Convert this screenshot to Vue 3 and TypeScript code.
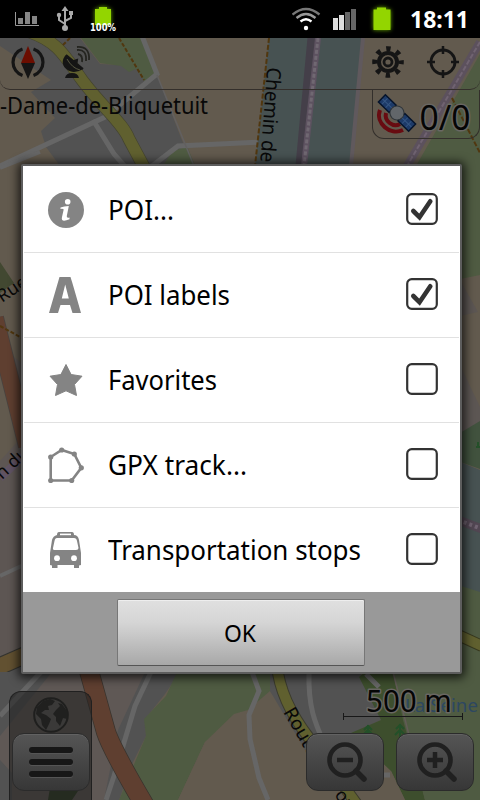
<script setup lang="ts">
import { reactive } from 'vue'

type IconName = 'info' | 'letter' | 'star' | 'track' | 'bus'

interface Layer {
  icon: IconName
  label: string
  width: number
  checked: boolean
}

const layers = reactive<Layer[]>([
  { icon: 'info', label: 'POI...', width: 66, checked: true },
  { icon: 'letter', label: 'POI labels', width: 122, checked: true },
  { icon: 'star', label: 'Favorites', width: 109, checked: false },
  { icon: 'track', label: 'GPX track...', width: 139, checked: false },
  { icon: 'bus', label: 'Transportation stops', width: 253, checked: false },
])
</script>

<template>
  <div class="screen">
    <svg class="map" width="480" height="800" viewBox="0 0 480 800" aria-hidden="true">
      <rect width="480" height="800" fill="#625a4e" />
      <path d="M0 38H80L100 64 133 66 157 75 181 138 194 166H60L46 147 41 131 55 118 31 92 51 80 0 46Z" fill="#525252" />
      <path d="M81 38H142L157 74 146 83 136 69 129 72 121 66 100 63Z" fill="#4f5b42" />
      <path d="M172 152L187 146 197 170H160Z" fill="#4f5b42" />
      <g fill="none" stroke="#666" stroke-width="5">
        <path d="M142 36L157 74 105 117 0 166" />
        <path d="M93 120L114 154 128 170" />
        <path d="M152 166L178 146 262 142" />
      </g>
      <path d="M157 75L194 166" stroke="#626060" stroke-width="1.5" />
      <path d="M30 32C58 42 64 55 82 80C102 107 123 123 129 139L145 169" fill="none" stroke="#454530" stroke-width="13" />
      <path d="M30 32C58 42 64 55 82 80C102 107 123 123 129 139L145 169" fill="none" stroke="#60602f" stroke-width="11.5" />
      <path d="M119 38L144 80M70 38L62 46" stroke="#51370f" stroke-width="2" stroke-dasharray="4 2" fill="none" />

      <path d="M269 38H363L351 166H255Z" fill="#475252" />
      <path d="M363 38L351 166" stroke="#60595d" stroke-width="4" />
      <path d="M269 38L255 166" stroke="#51370f" stroke-width="2" stroke-dasharray="5 2" />
      <path d="M312 38L300 166" stroke="#443f49" stroke-width="9" />
      <path d="M318 38L304 166" stroke="#5d5260" stroke-width="6" />
      <path d="M318 38L304 166" stroke="#706872" stroke-width="3" stroke-dasharray="4 2" />

      <path d="M480 54V280L464 286 455 270V166H416Z" fill="#4f5b42" />
      <path d="M480 42L407 166" stroke="#5c515d" stroke-width="8" />
      <path d="M480 42L407 166" stroke="#706371" stroke-width="2" stroke-dasharray="5 2" />
      <path d="M452 98L480 153" stroke="#51370f" stroke-width="2" stroke-dasharray="5 2" />

      <path d="M0 262L14 283 0 293Z" fill="#424831" />
      <path d="M0 168L40 152" stroke="#666" stroke-width="4" />
      <path d="M0 333L8 335V353L25 365V680H0Z" fill="#5d5653" />
      <path d="M0 370L19 440 0 461Z" fill="#625a4e" />
      <path d="M-5 318Q8 370 27 446" fill="none" stroke="#474340" stroke-width="18" />
      <path d="M-5 318Q8 370 27 446" fill="none" stroke="#5f3f30" stroke-width="16.5" />
      <path d="M0 326L22 338" stroke="#51370f" stroke-width="2" stroke-dasharray="4 2" />
      <path d="M0 478L30 450" stroke="#605363" stroke-width="8" />
      <path d="M0 576L30 562" stroke="#666" stroke-width="4" />
      <path d="M0 662L30 649V674L0 684Z" fill="#525252" />
      <path d="M-2 667L30 653" stroke="#343430" stroke-width="18" />
      <path d="M-2 667L30 653" stroke="#625131" stroke-width="16" />

      <path d="M455 280L480 275V425L455 440Z" fill="#625a4e" />
      <path d="M460 280L478 312 460 316ZM460 365L480 407V422L460 434Z" fill="#5c5653" />
      <path d="M455 436L480 421V469L455 460Z" fill="#41523e" />
      <path d="M455 460L480 470V595L455 585Z" fill="#475252" />
      <path d="M455 584L480 592V800H455Z" fill="#4f5b42" />
      <path d="M458 520L482 529" stroke="#514652" stroke-width="9" />
      <path d="M458 520L482 529" stroke="#706371" stroke-width="4" stroke-dasharray="3 3" />
      <path d="M458 635L482 646" stroke="#38391f" stroke-width="12" />
      <path d="M458 635L482 646" stroke="#60602f" stroke-width="10" />
      <path d="M476 447H480M478 442V447" stroke="#245029" stroke-width="2" />

      <path d="M0 672H180L165 694 145 719 146 736 133 762 119 800H0Z" fill="#525252" />
      <path d="M52 672H145L118 730 104 800H0V736Z" fill="#5f5855" />
      <path d="M0 760L12 773V800H0Z" fill="#525252" />
      <path d="M177 672H272V691L254 714 240 712V718L205 742 178 800H119L146 736 144 719 166 696Z" fill="#4f5b42" />
      <path d="M178 800L205 742 234 714 248 710 270 691 305 735V800Z" fill="#625a4e" />
      <path d="M270 672H360L381 720 335 742 305 750 270 691Z" fill="#525252" />
      <path d="M359 677L365 672H395L425 800H405L391 771 351 733 381 720Z" fill="#3d4e2d" />
      <path d="M393 672H480V800H425L403 720Z" fill="#4f5b42" />
      <path d="M375 775L391 771 405 800H350Z" fill="#625a4e" />
      <path d="M393 672L409 735" stroke="#625b56" stroke-width="1.5" />
      <path d="M50 788L62 782H84L72 800H48Z" fill="#2b391f" />
      <g fill="none" stroke="#666" stroke-width="5">
        <path d="M41 672L0 716" />
        <path d="M151 672L135 706 114 776 106 800" />
        <path d="M252 672L259 691 249 715 250 739 259 778 268 800" />
        <path d="M309 672C308 710 316 725 327 750" />
        <path d="M366 674L379 687M383 775H390" />
      </g>
      <path d="M86 660L106 732Q112 750 145 806" fill="none" stroke="#39342e" stroke-width="20" />
      <path d="M86 660L106 732Q112 750 145 806" fill="none" stroke="#5f3f30" stroke-width="18.5" />
      <path d="M277 665Q280 700 309 738L361 810" fill="none" stroke="#3b3b2d" stroke-width="12" />
      <path d="M277 665Q280 700 309 738L361 810" fill="none" stroke="#60602f" stroke-width="10" />
      <g fill="none" stroke="#235029" stroke-width="2">
        <path d="M368 725V738M364 730L368 726 372 730M363 735L368 730 373 735" />
        <path d="M400 724V738M396 729L400 725 404 729M395 735L400 730 405 735" />
      </g>

      <g class="map-text">
        <text x="0" y="114" font-size="23.5" textLength="208" lengthAdjust="spacingAndGlyphs">-Dame-de-Bliquetuit</text>
        <text transform="translate(267 67) rotate(94)" font-size="20" textLength="95" lengthAdjust="spacingAndGlyphs">Chemin de</text>
        <text transform="translate(2 303) rotate(-34)" font-size="18">Rue</text>
        <text transform="translate(2 480) rotate(-43)" font-size="18">n du</text>
        <text transform="translate(283 712) rotate(60)" font-size="19">Route</text>
        <text transform="translate(334 795) rotate(53)" font-size="18">oute</text>
        <text x="405" y="712" font-size="18.5" fill="#2d4761" textLength="73" lengthAdjust="spacingAndGlyphs">La Seine</text>
      </g>
    </svg>

    <header class="status">
      <svg class="status-left" width="130" height="38" viewBox="0 0 130 38">
        <path d="M15.5 12V25.5H39" fill="none" stroke="#999" />
        <path d="M18 18H23V24H18ZM25 12H30V24H25ZM32 16H37V24H32Z" fill="#858585" />
        <g fill="none" stroke="#aaa" stroke-width="2">
          <path d="M65 8V29M65 24L59 20V15M65 21L71 18V13" />
        </g>
        <path d="M65 6L61.5 11H68.5Z" fill="#aaa" />
        <circle cx="65" cy="28" r="3" fill="#aaa" />
        <circle cx="59" cy="15" r="2.2" fill="#aaa" />
        <path d="M69 11H73V15H69Z" fill="#aaa" />
        <path class="battery" d="M95 9H99V7H107V9H111V25H95Z" />
        <text x="90" y="31" font-family="DejaVu Sans, sans-serif" font-size="10" font-weight="700" fill="#fff" textLength="26" lengthAdjust="spacingAndGlyphs">100%</text>
      </svg>
      <svg class="status-right" width="188" height="38" viewBox="292 0 188 38">
        <g fill="none" stroke-width="2.3">
          <path d="M292.500 14.500Q306 3.500 319.500 14.500" stroke="#777" />
          <path d="M296.500 18Q306 10 315.500 18" stroke="#999" />
          <path d="M300.500 21.500Q306 17 311.500 21.500" stroke="#fff" />
        </g>
        <circle cx="306" cy="28" r="2.2" fill="#fff" />
        <path d="M333 18H338V30H333ZM339 15H344V30H339Z" fill="#ddd" />
        <path d="M345 12H350V30H345ZM351 9H356V30H351Z" fill="#666" />
        <path class="battery" d="M373.500 9.500H377V7.500H386V9.500H390.500V30H373.500Z" />
        <text class="clock" x="410" y="28" textLength="59" lengthAdjust="spacingAndGlyphs">18:11</text>
      </svg>
    </header>

    <div class="toolbar">
      <svg width="92" height="52" viewBox="0 38 92 52">
        <path d="M22.500 49A14 14 0 0 0 22.500 75.500M33.500 49A14 14 0 0 1 33.500 75.500" fill="none" stroke="#151515" stroke-width="3.200" />
        <path d="M28 46L35 63H21Z" fill="#6b0d00" />
        <path d="M21 63H35L28 79Z" fill="#151515" />
        <g fill="#151515">
          <path d="M66 55C59 62 64 71 74 72Q79 72 83 69Z" />
          <path d="M65 78Q66 73 72 73Q78 73 79 78Z" />
        </g>
        <path d="M66 55L83 69M71 62L77 60L76 66" fill="none" stroke="#151515" stroke-width="2" />
        <path d="M67 59Q72 68 80 70" fill="none" stroke="#555540" stroke-width="1" />
        <path d="M78 54Q83 55 82 62M77 50Q87 49 86 61M77 47Q90 46 89 60" fill="none" stroke="#252520" stroke-width="1.800" />
      </svg>
      <svg width="118" height="52" viewBox="362 38 118 52">
        <g fill="none" stroke="#151515">
          <circle cx="388" cy="62" r="9" stroke-width="4" />
          <circle cx="388" cy="62" r="4" stroke-width="2.800" />
          <circle cx="388" cy="62" r="13.300" stroke-width="5" stroke-dasharray="4.400 6.045" stroke-dashoffset="2.200" />
          <circle cx="443" cy="62" r="12" stroke-width="2.800" />
          <path d="M443 46V54M443 70V78M427 62H435M451 62H459" stroke-width="2.500" />
        </g>
      </svg>
    </div>

    <div class="gps">
      <svg width="107" height="48" viewBox="0 0 107 48">
        <path d="M7 20C2 33 17 46 30 40M13 23C11 31 20 38 27 34" fill="none" stroke="#680b11" stroke-width="4" />
        <g transform="translate(24 23) rotate(44)">
          <path d="M-21 -5H-6V5H-21ZM6 -5H21V5H6Z" fill="#1d3a68" stroke="#06142b" stroke-width="1.500" />
          <path d="M-17 -4V4M-12 -4V4M11 -4V4M16 -4V4M-20 0H-7M7 0H20" stroke="#355683" />
          <circle r="7" fill="#62666a" stroke="#30363b" />
        </g>
        <text class="halo" x="46.500" y="39.500" font-size="34" textLength="51" lengthAdjust="spacingAndGlyphs">0/0</text>
      </svg>
    </div>

    <footer class="controls">
      <div class="layers-panel">
        <svg width="36" height="36" viewBox="0 0 36 36">
          <circle cx="18" cy="18" r="16.800" fill="#3a3938" stroke="#1f1f1e" stroke-width="2" />
          <path d="M4 10L10 4 17 2 22 4 19 8 15 9 16 13 12 13 8 16 13 18 18 22 16 27 13 33 9 28 8 22 3 17ZM23 13L27 9 25 6 29 7 34 14V22L30 21 27 29 23 24V20L20 17Z" fill="#20201f" />
        </svg>
        <button class="key menu" aria-label="Menu"><i></i><i></i><i></i></button>
      </div>
      <div class="zoom">
        <svg class="scale" width="140" height="44" viewBox="340 680 140 44">
          <path d="M343.500 713V720M343.500 716.500H462.500M462.500 713V720" fill="none" stroke="#181818" />
          <text class="halo" x="366" y="711.500" font-size="30" textLength="86" lengthAdjust="spacingAndGlyphs">500 m</text>
        </svg>
        <div class="zoom-keys">
          <button v-for="sign in ['out', 'in']" :key="sign" class="key" :aria-label="`Zoom ${sign}`">
            <svg width="44" height="44" viewBox="0 0 44 44" fill="none" stroke="#202020">
              <circle cx="22" cy="21" r="15.500" stroke-width="4.600" />
              <path d="M33 32L41 40" stroke-width="5.500" stroke-linecap="round" />
              <path :d="sign === 'in' ? 'M14 21H30M22 13V29' : 'M14 21H30'" stroke-width="4.500" />
            </svg>
          </button>
        </div>
      </div>
    </footer>

    <div class="overlay">
      <section class="dialog" role="dialog">
        <label v-for="layer in layers" :key="layer.label" class="row">
          <svg class="icon" width="36" height="36" viewBox="0 0 36 36">
            <template v-if="layer.icon === 'info'">
              <circle cx="18" cy="18" r="18" />
              <circle cx="19.700" cy="9.700" r="2.800" fill="#fff" />
              <path d="M12.500 15.500Q16 14 20.800 14L18.800 24Q18.300 26.300 21.500 25.500V27.300Q12.500 31 14 25L15.700 17.500Q15 16.500 12.500 17Z" fill="#fff" />
            </template>
            <path v-else-if="layer.icon === 'letter'" fill-rule="evenodd" d="M11.500 0H22.500Q24.500 6 33 36H24.500L22 28H12.500L10 36H1ZM17.200 7.500L13.800 21.500H20.800Z" />
            <path v-else-if="layer.icon === 'star'" d="M18 2.500L23.100 12.500 34 14.200 26.500 22.500 28.500 33.500 18 28.800 7.500 33.500 9.500 22.500 2 14.200 12.900 12.500Z" stroke="#848484" stroke-linejoin="round" />
            <template v-else-if="layer.icon === 'track'">
              <path d="M2.700 10L13.700 3 26.300 7 33.300 20.800 23.700 33.500H2.700Z" fill="none" stroke="#848484" stroke-width="2.600" />
              <circle v-for="[x, y] in [[2.700, 10], [13.700, 3], [26.300, 7], [33.300, 20.800], [23.700, 33.500], [2.700, 33.500]]" :key="`${x}-${y}`" :cx="x" :cy="y" r="2.600" />
            </template>
            <template v-else>
              <path d="M9 3Q9 0 11 0H24Q26 0 26 3Q30 3 31 8L33 21V33L31 33.500V36H26V33H9.500V36H4V33.500L2 33V21L4 8Q5 4 9 3Z" />
              <rect x="12" y="1.600" width="11" height="1.600" fill="#fff" />
              <path d="M9 6H26Q28.500 6 29 9L30.500 16Q30.500 18 28 18H7Q4.500 18 5 16L6.500 9Q7 6 9 6Z" fill="#fff" />
              <circle cx="9" cy="26.200" r="2.900" fill="#fff" />
              <circle cx="26" cy="26.200" r="2.900" fill="#fff" />
            </template>
          </svg>
          <svg class="label" width="270" height="84">
            <text x="0" y="52" :textLength="layer.width" lengthAdjust="spacingAndGlyphs">{{ layer.label }}</text>
          </svg>
          <input v-model="layer.checked" type="checkbox" />
          <svg class="box" width="32" height="32" viewBox="0 0 32 32" fill="none">
            <rect x="1.200" y="1.200" width="29.600" height="29.600" rx="4.500" stroke="#333" stroke-width="2.200" />
            <path v-if="layer.checked" d="M7.300 18L13.500 24.200 24.300 8.300" stroke="#333" stroke-width="4.600" stroke-linecap="round" />
          </svg>
        </label>
        <div class="actions">
          <button class="ok">
            <svg width="40" height="36"><text x="3" y="27" textLength="32" lengthAdjust="spacingAndGlyphs">OK</text></svg>
          </button>
        </div>
      </section>
    </div>
  </div>
</template>

<style>
body {
  margin: 0;
  overflow: hidden;
}
</style>

<style scoped>
.screen {
  position: relative;
  display: flex;
  flex-direction: column;
  width: 480px;
  height: 800px;
  overflow: hidden;
  font-family: "Noto Sans", "Open Sans", sans-serif;
}
svg {
  display: block;
  flex: none;
}
button {
  padding: 0;
  font: inherit;
}
.map {
  position: absolute;
  inset: 0;
}
.map-text {
  fill: #080808;
}
.status,
.toolbar,
.gps,
.controls {
  z-index: 1;
  box-sizing: border-box;
}
.status {
  display: flex;
  justify-content: space-between;
  height: 38px;
  background: #000;
}
.battery {
  fill: #93d500;
  filter: drop-shadow(0 0 2px #6bab00);
}
.clock {
  fill: #fff;
  font-size: 24px;
  font-weight: 700;
}
.toolbar {
  display: flex;
  justify-content: space-between;
  height: 52px;
  border-bottom: 1px solid #342f2b;
  border-radius: 0 0 10px 10px;
}
.gps {
  align-self: flex-end;
  width: 108px;
  height: 49px;
  border: 1px solid #332f2b;
  border-top: 0;
  border-radius: 0 0 12px 12px;
}
.halo {
  fill: #050505;
  stroke: #696763;
  stroke-width: 3px;
  stroke-linejoin: round;
  paint-order: stroke;
}
.controls {
  display: flex;
  justify-content: space-between;
  align-items: flex-end;
  margin-top: auto;
}
.layers-panel {
  display: flex;
  flex-direction: column;
  align-items: center;
  box-sizing: border-box;
  width: 83px;
  height: 109px;
  margin-left: 9px;
  padding-top: 5px;
  border: 1px solid #202020;
  border-bottom: 0;
  border-radius: 12px 12px 0 0;
  background: rgba(32, 32, 32, 0.58);
}
.key {
  display: flex;
  align-items: center;
  justify-content: center;
  flex: none;
  box-sizing: border-box;
  width: 78px;
  height: 58px;
  border: 1px solid #2b2b2b;
  border-radius: 12px;
  background: linear-gradient(#555, #373737);
  box-shadow: inset 0 1px #626262;
}
.menu {
  flex-direction: column;
  gap: 6px;
}
.menu i {
  width: 44px;
  height: 6px;
  border-radius: 3px;
  background: #171717;
  box-shadow: 0 1px #555;
}
.zoom {
  display: flex;
  flex-direction: column;
  align-items: flex-end;
  gap: 9px;
}
.zoom-keys {
  display: flex;
  gap: 12px;
  padding: 0 6px 9px 0;
}
.zoom-keys svg {
  padding-bottom: 2px;
}
.overlay {
  position: absolute;
  inset: 38px 0 0;
  z-index: 2;
  display: flex;
  align-items: center;
  justify-content: center;
}
.dialog {
  box-sizing: border-box;
  width: 441px;
  height: 510px;
  margin-left: 3px;
  border: 2px solid #5d5d5d;
  border-radius: 2px;
  background: #fff;
  box-shadow: 0 1px 10px 3px rgba(0, 0, 0, 0.7);
}
.row {
  display: flex;
  align-items: center;
  box-sizing: border-box;
  height: 85px;
  margin: 0 1px;
  padding: 0 21px 0 24px;
  border-top: 1px solid #e1e1e1;
}
.row:first-child {
  height: 86px;
  border-top: 2px solid transparent;
}
.icon {
  fill: #848484;
}
.label {
  margin-left: 24px;
  font-size: 27px;
}
.row input {
  position: absolute;
  opacity: 0;
}
.box {
  margin: -2px 0 0 auto;
}
.actions {
  display: flex;
  align-items: flex-start;
  box-sizing: border-box;
  height: 80px;
  padding: 7px 0 0 94px;
  background: #999;
}
.ok {
  display: flex;
  align-items: center;
  justify-content: center;
  box-sizing: border-box;
  width: 248px;
  height: 67px;
  border: 1px solid #777;
  border-bottom-color: #555;
  border-radius: 2px;
  background: linear-gradient(#e0e0e0, #d5d5d5 35%, #a8a8a8);
  box-shadow: inset 0 1px #eee;
  font-size: 23px;
}
</style>
